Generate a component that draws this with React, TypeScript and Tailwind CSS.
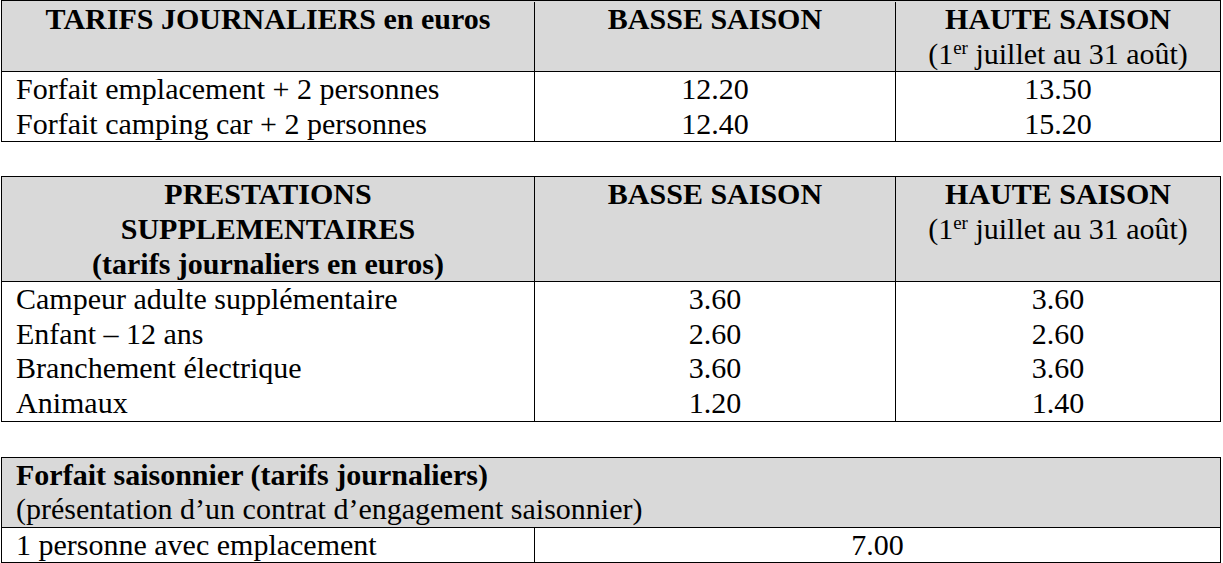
import React from 'react';

const tarifs = [
  { label: 'Forfait emplacement + 2 personnes', basse: '12.20', haute: '13.50' },
  { label: 'Forfait camping car + 2 personnes', basse: '12.40', haute: '15.20' },
];

const prestations = [
  { label: 'Campeur adulte supplémentaire', basse: '3.60', haute: '3.60' },
  { label: 'Enfant – 12 ans', basse: '2.60', haute: '2.60' },
  { label: 'Branchement électrique', basse: '3.60', haute: '3.60' },
  { label: 'Animaux', basse: '1.20', haute: '1.40' },
];

const HauteSaison = () => (
  <div className="text-center">
    <div className="font-bold">HAUTE SAISON</div>
    <div>
      (1<sup className="text-[19px]">er</sup> juillet au 31 août)
    </div>
  </div>
);

const Body = ({ rows }: { rows: { label: string; basse: string; haute: string }[] }) => (
  <div className="grid grid-cols-[533px_361px_1fr]">
    <div className="border-r border-black pl-[14px]">
      {rows.map((r) => (
        <div key={r.label}>{r.label}</div>
      ))}
    </div>
    <div className="border-r border-black text-center">
      {rows.map((r) => (
        <div key={r.label}>{r.basse}</div>
      ))}
    </div>
    <div className="text-center">
      {rows.map((r) => (
        <div key={r.label}>{r.haute}</div>
      ))}
    </div>
  </div>
);

const App = () => {
  return (
    <div className="bg-white min-h-screen pl-[1px] text-black text-[30px] leading-[34.6px] font-['Liberation_Serif',serif]">
      <div className="w-[1220px] border border-black">
        <div className="grid grid-cols-[533px_361px_1fr] bg-[#d9d9d9] border-b border-black pt-[1px]">
          <div className="border-r border-black text-center font-bold">TARIFS JOURNALIERS en euros</div>
          <div className="border-r border-black text-center font-bold">BASSE SAISON</div>
          <HauteSaison />
        </div>
        <Body rows={tarifs} />
      </div>

      <div className="w-[1220px] border border-black mt-[34px]">
        <div className="grid grid-cols-[533px_361px_1fr] bg-[#d9d9d9] border-b border-black">
          <div className="border-r border-black text-center font-bold">
            PRESTATIONS
            <br />
            SUPPLEMENTAIRES
            <br />
            (tarifs journaliers en euros)
          </div>
          <div className="border-r border-black text-center font-bold">BASSE SAISON</div>
          <HauteSaison />
        </div>
        <Body rows={prestations} />
      </div>

      <div className="w-[1220px] border border-black mt-[35px]">
        <div className="bg-[#d9d9d9] border-b border-black pl-[14px]">
          <div className="font-bold">Forfait saisonnier (tarifs journaliers)</div>
          <div>(présentation d’un contrat d’engagement saisonnier)</div>
        </div>
        <div className="grid grid-cols-[533px_1fr]">
          <div className="border-r border-black pl-[14px]">1 personne avec emplacement</div>
          <div className="text-center">7.00</div>
        </div>
      </div>
    </div>
  );
};

export default App;
